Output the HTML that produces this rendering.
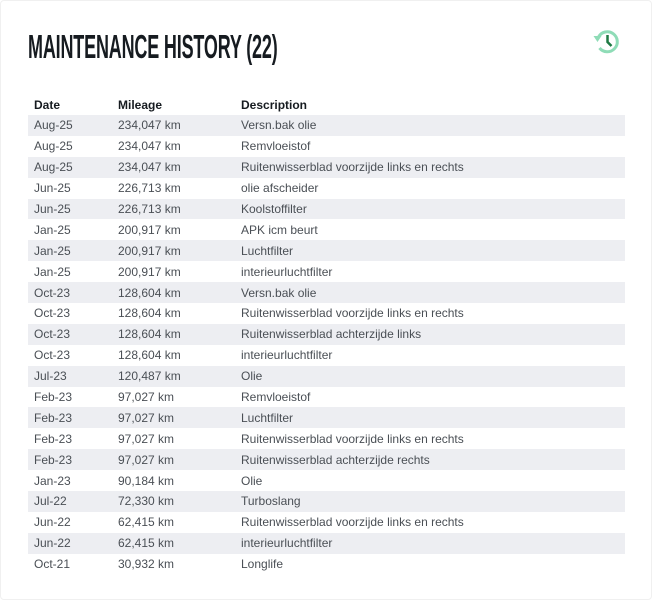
<!DOCTYPE html>
<html><head><meta charset="utf-8"><style>
body{margin:0;background:#fff;width:652px;height:600px;overflow:hidden;font-family:"Liberation Sans",sans-serif;}
.card{position:absolute;left:0;top:0;width:650px;height:598px;border:1px solid #f0f0f0;border-radius:4px;}
h1{position:absolute;left:28px;top:28px;margin:0;font-size:33px;font-weight:bold;color:#161b20;transform:scaleX(0.545);transform-origin:left top;white-space:nowrap;letter-spacing:-0.3px;}
.ic{position:absolute;left:592px;top:27px;}
table{position:absolute;left:28px;top:94px;width:597px;border-collapse:collapse;font-size:12px;color:#4a4f55;}
th{text-align:left;font-weight:bold;color:#161b20;height:21px;padding:0 0 0 6px;}
td{height:20.9px;padding:0 0 0 6px;white-space:nowrap;}
tr:nth-child(even) td{background:#edeef2;}
tr:nth-child(odd) td{background:#fff;}
</style></head><body>
<div class="card"></div>
<h1>MAINTENANCE HISTORY (22)</h1>
<svg class="ic" width="31" height="30" viewBox="0 0 30 30">
<path d="M6 10 A10 10 0 1 1 7 21" fill="none" stroke="#8fdcb7" stroke-width="3"/>
<path d="M1 9 L9 9 L5 15 Z" fill="#8fdcb7"/>
<path d="M15 8 L15 15 L19 19" fill="none" stroke="#1e7a43" stroke-width="2.5"/>
</svg>
<table>
<tr><th style="width:78px">Date</th><th style="width:117px">Mileage</th><th>Description</th></tr>
<tr><td>Aug-25</td><td>234,047 km</td><td>Versn.bak olie</td></tr>
<tr><td>Aug-25</td><td>234,047 km</td><td>Remvloeistof</td></tr>
<tr><td>Aug-25</td><td>234,047 km</td><td>Ruitenwisserblad voorzijde links en rechts</td></tr>
<tr><td>Jun-25</td><td>226,713 km</td><td>olie afscheider</td></tr>
<tr><td>Jun-25</td><td>226,713 km</td><td>Koolstoffilter</td></tr>
<tr><td>Jan-25</td><td>200,917 km</td><td>APK icm beurt</td></tr>
<tr><td>Jan-25</td><td>200,917 km</td><td>Luchtfilter</td></tr>
<tr><td>Jan-25</td><td>200,917 km</td><td>interieurluchtfilter</td></tr>
<tr><td>Oct-23</td><td>128,604 km</td><td>Versn.bak olie</td></tr>
<tr><td>Oct-23</td><td>128,604 km</td><td>Ruitenwisserblad voorzijde links en rechts</td></tr>
<tr><td>Oct-23</td><td>128,604 km</td><td>Ruitenwisserblad achterzijde links</td></tr>
<tr><td>Oct-23</td><td>128,604 km</td><td>interieurluchtfilter</td></tr>
<tr><td>Jul-23</td><td>120,487 km</td><td>Olie</td></tr>
<tr><td>Feb-23</td><td>97,027 km</td><td>Remvloeistof</td></tr>
<tr><td>Feb-23</td><td>97,027 km</td><td>Luchtfilter</td></tr>
<tr><td>Feb-23</td><td>97,027 km</td><td>Ruitenwisserblad voorzijde links en rechts</td></tr>
<tr><td>Feb-23</td><td>97,027 km</td><td>Ruitenwisserblad achterzijde rechts</td></tr>
<tr><td>Jan-23</td><td>90,184 km</td><td>Olie</td></tr>
<tr><td>Jul-22</td><td>72,330 km</td><td>Turboslang</td></tr>
<tr><td>Jun-22</td><td>62,415 km</td><td>Ruitenwisserblad voorzijde links en rechts</td></tr>
<tr><td>Jun-22</td><td>62,415 km</td><td>interieurluchtfilter</td></tr>
<tr><td>Oct-21</td><td>30,932 km</td><td>Longlife</td></tr>
</table>
</body></html>
